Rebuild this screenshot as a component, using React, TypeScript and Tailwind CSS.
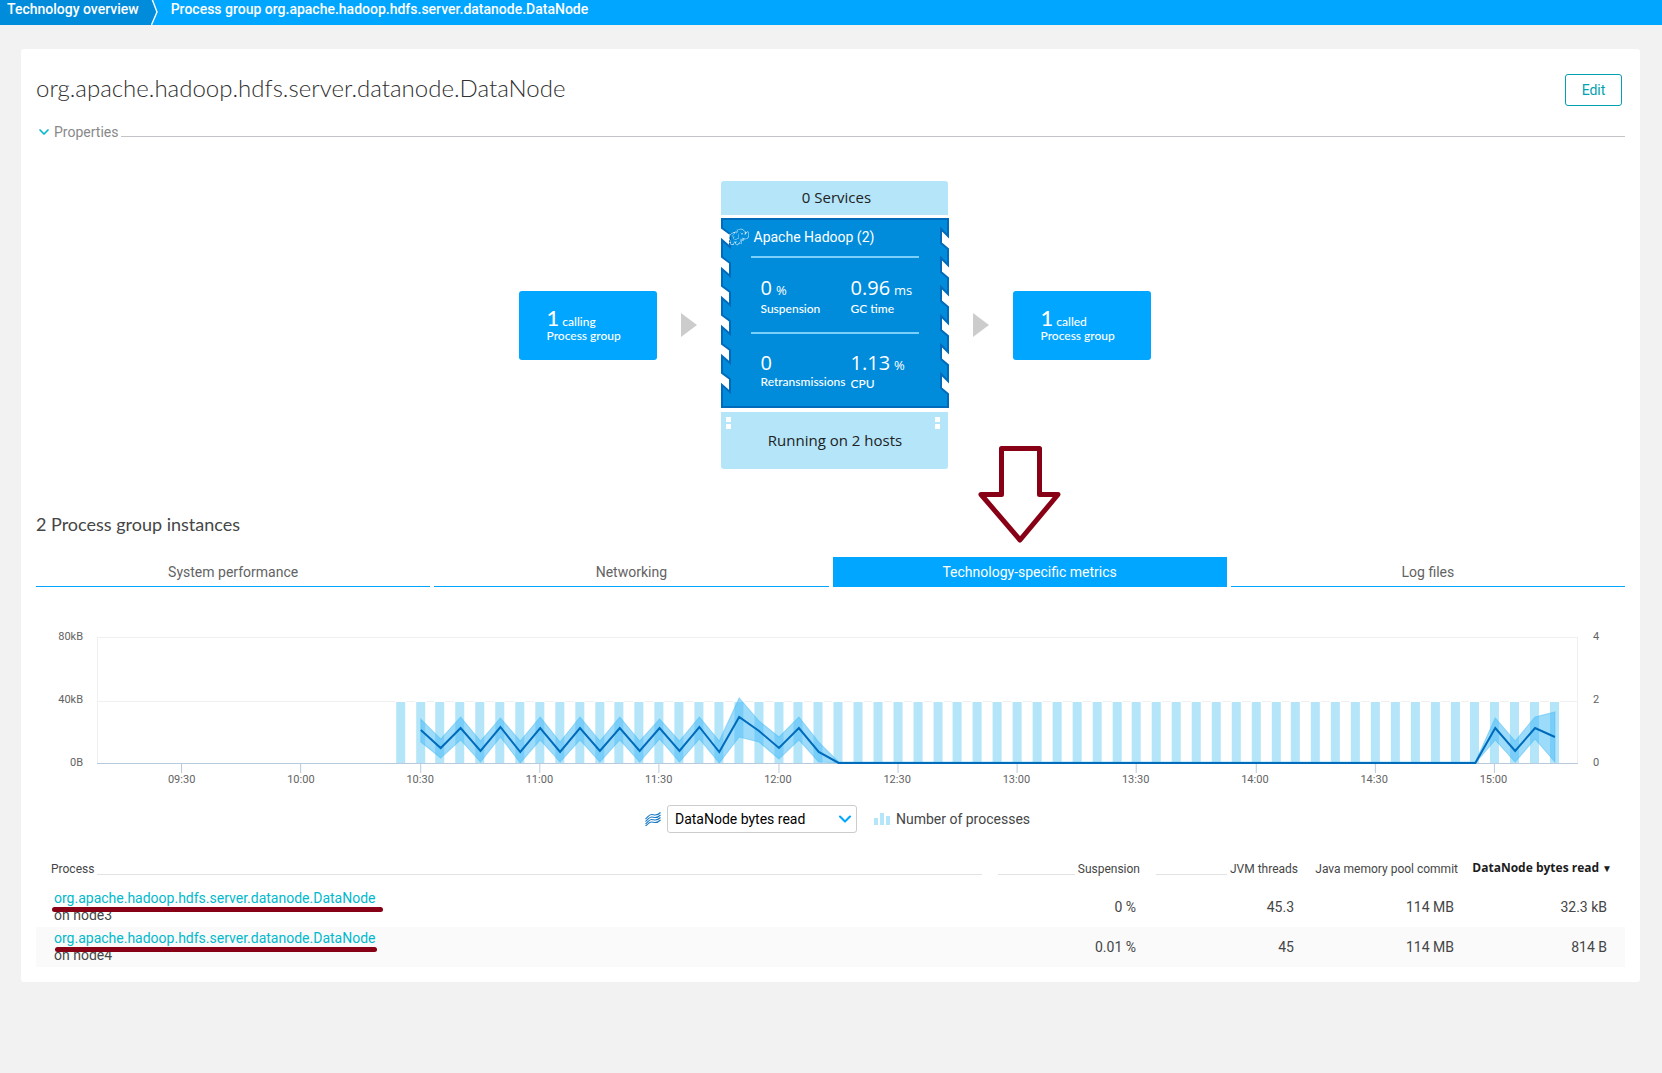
import React from 'react';
import { ChevronDown } from 'lucide-react';
import { SiApachehadoop } from 'react-icons/si';

const PROCESS_NAME = 'org.apache.hadoop.hdfs.server.datanode.DataNode';

const TABS = ['System performance', 'Networking', 'Technology-specific metrics', 'Log files'];

const TIMES = ['09:30', '10:00', '10:30', '11:00', '11:30', '12:00', '12:30', '13:00', '13:30', '14:00', '14:30', '15:00'];

const PROCESSES = [
  { node: 'node3', suspension: '0 %', threads: '45.3', memory: '114 MB', bytes: '32.3 kB', marker: '-left-[2px] w-[331px]' },
  { node: 'node4', suspension: '0.01 %', threads: '45', memory: '114 MB', bytes: '814 B', marker: 'left-[1px] w-[322px]' },
];

// chart geometry, one step is five minutes
const CHART_WIDTH = 1480;
const CHART_HEIGHT = 126;
const FIRST_TICK = 84;
const HALF_HOUR = 119.3;
const STEP = HALF_HOUR / 6;
const BAR_COUNT = 59;

// [step after 10:30, upper, average, lower]
const POINTS: number[][] = [
  [0, 82, 93, 105], [1, 102, 111, 121], [2, 80, 91, 103], [3, 104, 114, 125],
  [4, 81, 90, 100], [5, 104, 115, 126], [6, 80, 91, 103], [7, 105, 115, 125],
  [8, 80, 91, 103], [9, 104, 114, 125], [10, 80, 91, 103], [11, 104, 114, 125],
  [12, 82, 91, 102], [13, 104, 114, 125], [14, 80, 90, 102], [15, 104, 115, 126],
  [16, 61, 80, 100], [17, 84, 94, 105], [18, 100, 111, 122], [19, 80, 91, 103],
  [20, 105, 115, 125], [21, 125, 126, 126], [53, 125, 126, 126], [54, 81, 91, 103],
  [55, 104, 114, 125], [56, 80, 91, 102], [57, 75, 100, 125],
];

const xAt = (step: number) => FIRST_TICK + 1 + HALF_HOUR * 2 + STEP * step;

const toPoints = (rows: number[][], column: number) =>
  rows.map(row => `${xAt(row[0])},${row[column]}`).join(' ');

const Breadcrumbs: React.FC = () => (
  <nav className="flex h-[25px] bg-[#00a6ff] text-sm leading-[18px] font-medium text-white">
    <a href="#technologies" className="bg-[#008cdb] pl-[7px] pr-3">Technology overview</a>
    <svg className="h-[25px] w-2 shrink-0" viewBox="0 0 8 25">
      <path d="M0 0H1L6 12L0 25Z" fill="#008cdb" />
      <path d="M1 -1L6 12L0 26" fill="none" stroke="#fff" strokeWidth="1.4" />
    </svg>
    <a href="#group" className="pl-3">Process group {PROCESS_NAME}</a>
  </nav>
);

const LinkedGroup: React.FC<{ count: number; kind: string }> = ({ count, kind }) => (
  <button className="flex h-[69px] w-[138px] flex-col justify-center rounded-[3px] bg-[#00a6ff] pl-7 text-left font-[Lato] text-xs leading-[14px] font-medium text-white">
    <span><span className="text-[22px] leading-5">{count}</span> {kind}</span>
    <span>Process group</span>
  </button>
);

const FlowArrow: React.FC = () => (
  <svg className="h-6 w-4" viewBox="0 0 16 24">
    <path d="M0 0L16 12L0 24Z" fill="#ccc" />
  </svg>
);

const Metric: React.FC<{ value: string; unit?: string; label: string }> = ({ value, unit, label }) => (
  <div className="whitespace-nowrap">
    <div className="flex items-baseline gap-1 font-['Open_Sans'] text-xl leading-6 font-medium">
      {value}
      <span className="text-[13px]">{unit}</span>
    </div>
    <div className="text-xs leading-[14px] font-medium">{label}</div>
  </div>
);

const NOTCHES = [0, 1, 2, 3, 4, 5];

const leftEdge = NOTCHES.map(i => {
  const y = 155 - i * 29;
  return `L1 ${y + 12}L9 ${y + 19}V${y + 6}L1 ${y}`;
}).join('');

const rightEdge = NOTCHES.map(i => {
  const y = 10 + i * 29;
  return `L227 ${y + 8}L220 ${y + 1}V${y + 15}L227 ${y + 21}`;
}).join('');

const HadoopCard: React.FC = () => (
  <div className="relative h-[190px] w-[228px] font-[Lato] text-white">
    <svg className="absolute inset-0 h-full w-full" viewBox="0 0 228 190">
      <path d={`M1 1H227${rightEdge}L227 189H1${leftEdge}Z`} fill="#008cdb" stroke="#006bba" strokeWidth="2" />
    </svg>
    <div className="relative flex h-[38px] items-center gap-[5px] pl-[6px]">
      <SiApachehadoop className="size-[22px]" />
      <span className="font-[Roboto] text-sm">Apache Hadoop (2)</span>
    </div>
    <div className="relative mx-[30px] grid grid-cols-[90px_1fr] border-t-2 border-[#7acffb] pt-[18px] pl-[10px]">
      <Metric value="0" unit="%" label="Suspension" />
      <Metric value="0.96" unit="ms" label="GC time" />
    </div>
    <div className="relative mx-[30px] mt-4 grid grid-cols-[90px_1fr] border-t-2 border-[#7acffb] pt-[17px] pl-[10px]">
      <Metric value="0" label="Retransmissions" />
      <Metric value="1.13" unit="%" label="CPU" />
    </div>
  </div>
);

const HostDots: React.FC = () => (
  <span className="flex flex-col gap-[2px]">
    <span className="size-[5px] bg-white" />
    <span className="size-[5px] bg-white" />
  </span>
);

const Topology: React.FC = () => (
  <section className="flex items-center justify-center gap-6 pl-2">
    <LinkedGroup count={1} kind="calling" />
    <FlowArrow />
    <div className="flex w-[228px] flex-col items-center gap-[3px] font-['Open_Sans'] text-[15px] text-[#222]">
      <button className="h-[34px] w-[227px] rounded-t-[3px] bg-[#b4e5f9] pb-[2px] pl-1">0 Services</button>
      <HadoopCard />
      <button className="mt-px flex h-[57px] w-[227px] items-start justify-between rounded-b-[3px] bg-[#b4e5f9] pt-[5px] pr-2 pl-[5px]">
        <HostDots />
        <span className="pt-3 pl-1">Running on 2 hosts</span>
        <HostDots />
      </button>
    </div>
    <FlowArrow />
    <LinkedGroup count={1} kind="called" />
  </section>
);

const MetricsTabs: React.FC = () => (
  <div role="tablist" className="relative grid grid-cols-4 gap-1 text-sm">
    {TABS.map(tab => {
      const active = tab === 'Technology-specific metrics';
      return (
        <button
          key={tab}
          role="tab"
          aria-selected={active}
          className={`h-[30px] border-b border-[#00a6ff] ${active ? 'bg-[#00a6ff] text-white' : 'text-[#636363]'}`}
        >
          {tab}
        </button>
      );
    })}
    <svg className="absolute bottom-[43px] left-[942px] h-[98px] w-[84px]" viewBox="0 0 84 98">
      <path
        d="M23.500 2.500H61.500V48.500H80L42 94L3 48.500H23.500Z"
        fill="none"
        stroke="#880015"
        strokeWidth="5"
        strokeLinejoin="round"
      />
    </svg>
  </div>
);

const AxisLabels: React.FC<{ labels: string[]; className: string }> = ({ labels, className }) => (
  <div className={`flex h-[138px] flex-col justify-between text-[11px] leading-3 text-[#636363] ${className}`}>
    {labels.map(label => <span key={label}>{label}</span>)}
  </div>
);

const MetricsChart: React.FC = () => (
  <div className="flex">
    <AxisLabels labels={['80kB', '40kB', '0B']} className="w-[47px] items-end" />
    <div className="ml-[14px] flex-1 pt-[6px]">
      <svg
        className="block h-[136px] w-full"
        viewBox={`0 0 ${CHART_WIDTH} 136`}
        preserveAspectRatio="none"
      >
        <path d={`M0.500 126V0.500H1479.500V126M0 64.500H${CHART_WIDTH}`} fill="none" stroke="#f0f0f0" />
        {Array.from({ length: BAR_COUNT }, (_, i) => (
          <g key={i}>
            <rect x={Math.round(xAt(i - 1)) - 6} y="64" width="11" height="1" fill="#fff" />
            <rect x={Math.round(xAt(i - 1)) - 5} y="65" width="9" height="61" fill="#b4e5f9" />
          </g>
        ))}
        <polygon
          points={`${toPoints(POINTS, 1)} ${toPoints([...POINTS].reverse(), 3)}`}
          fill="#3cb8f7"
          fillOpacity="0.5"
          stroke="#4cbdf5"
          strokeOpacity="0.5"
        />
        <path d={`M0 ${CHART_HEIGHT}.5H${CHART_WIDTH}`} stroke="#b7cbdc" />
        {TIMES.map((time, i) => (
          <path key={time} d={`M${Math.round(FIRST_TICK + i * HALF_HOUR)}.5 127V136`} stroke="#b7cbdc" />
        ))}
        <polyline points={toPoints(POINTS, 2)} fill="none" stroke="#006bba" strokeWidth="2" />
      </svg>
      <div className="grid grid-cols-12 px-[25px] text-center text-[11px] leading-[14px] text-[#636363]">
        {TIMES.map(time => <span key={time}>{time}</span>)}
      </div>
    </div>
    <AxisLabels labels={['4', '2', '0']} className="ml-[15px] w-8 items-start" />
  </div>
);

const ChartLegend: React.FC = () => (
  <div className="flex items-center justify-center pl-[14px] text-sm text-[#454646]">
    <svg className="mr-[6px] h-[14px] w-4" viewBox="0 0 16 14" fill="none" stroke="#1a7ac4" strokeWidth="1.1">
      <path d="M0.500 7C3 5 4 2.500 6.500 2.500C9 2.500 11 5 15.500 0.500" />
      <path d="M0.500 9.500C3 7.500 4 5 6.500 5C9 5 11 7.500 15.500 3" />
      <path d="M0.500 12C3 10 4 7.500 6.500 7.500C9 7.500 11 10 15.500 5.500" />
      <path d="M0.500 14C3 12 4 10 6.500 10C9 10 11 12.500 15.500 8" />
    </svg>
    <div className="relative">
      <select
        aria-label="Metric"
        className="block h-7 w-[190px] appearance-none rounded-[3px] border border-[#ccc] bg-white pl-[7px] text-sm text-black"
      >
        <option>DataNode bytes read</option>
      </select>
      <ChevronDown className="pointer-events-none absolute top-1 right-[2px] size-5 text-[#00a6ff]" strokeWidth={2.5} />
    </div>
    <svg className="mr-[6px] ml-[17px] h-[14px] w-4" viewBox="0 0 16 14" fill="#b4e5f9">
      <path d="M0 6H4V13H0ZM6 1H10V13H6ZM12 4H16V13H12Z" />
    </svg>
    <span>Number of processes</span>
  </div>
);

const Rule: React.FC = () => <span className="mb-[2px] h-px flex-1 self-end bg-[#e2e2e2]" />;

const ProcessTable: React.FC = () => (
  <table className="w-full table-fixed text-right text-sm text-[#454646]">
    <thead className="text-xs leading-4">
      <tr>
        <th className="pr-2 pl-[15px] font-normal">
          <span className="flex gap-[3px]">Process<Rule /></span>
        </th>
        <th className="w-[158px] px-2 font-normal">
          <span className="flex gap-[3px]"><Rule />Suspension</span>
        </th>
        <th className="w-[158px] px-2 font-normal">
          <span className="flex gap-[3px]"><Rule />JVM threads</span>
        </th>
        <th className="w-[160px] px-2 font-normal">Java memory pool commit</th>
        <th className="w-[159px] pr-[13px] font-bold whitespace-nowrap text-[#1c1c1c]" aria-sort="descending">
          <span className="font-['Open_Sans']">DataNode bytes read</span> <span className="text-[10px]">▼</span>
        </th>
      </tr>
      <tr className="h-[10px]" />
    </thead>
    <tbody>
      {PROCESSES.map(process => (
        <tr key={process.node} className="h-10 even:bg-[#fafafa]">
          <td className="pl-[18px] text-left leading-[17px]">
            <div className="relative w-fit">
              <a href={`#${process.node}`} className="text-[#00b9cc]">{PROCESS_NAME}</a>
              <span className={`absolute top-[17px] h-[5px] rounded-full bg-[#880015] ${process.marker}`} />
            </div>
            <div>on {process.node}</div>
          </td>
          <td className="pr-3">{process.suspension}</td>
          <td className="pr-3">{process.threads}</td>
          <td className="pr-3">{process.memory}</td>
          <td className="pr-[18px]">{process.bytes}</td>
        </tr>
      ))}
    </tbody>
  </table>
);

export default function App() {
  return (
    <div className="min-h-screen bg-[#f2f2f2] pb-6 font-[Roboto,sans-serif]">
      <Breadcrumbs />
      <main className="mt-6 mr-[22px] ml-[21px] rounded-[3px] bg-white px-[15px] pt-[25px] pb-[15px]">
        <header className="flex items-start justify-between pr-[3px]">
          <h1 className="font-[Lato] text-2xl leading-7 font-light text-[#303030]">{PROCESS_NAME}</h1>
          <button className="h-8 w-[57px] rounded-[3px] border border-[#00a1b2] text-sm text-[#00a1b2]">Edit</button>
        </header>
        <button className="mt-4 flex w-full items-center text-sm leading-5 text-[#898989]">
          <ChevronDown className="mr-[2px] size-4 text-[#00b9cc]" strokeWidth={2.5} />
          Properties
          <span className="mb-[5px] ml-[3px] h-px flex-1 self-end bg-[#c4c4c8]" />
        </button>
        <div className="mt-[39px]">
          <Topology />
        </div>
        <h2 className="mt-[43px] mb-[21px] font-[Lato] text-lg leading-6 text-[#454646]">2 Process group instances</h2>
        <MetricsTabs />
        <div className="mt-11">
          <MetricsChart />
        </div>
        <div className="mt-[18px] mb-[27px]">
          <ChartLegend />
        </div>
        <ProcessTable />
      </main>
    </div>
  );
}
